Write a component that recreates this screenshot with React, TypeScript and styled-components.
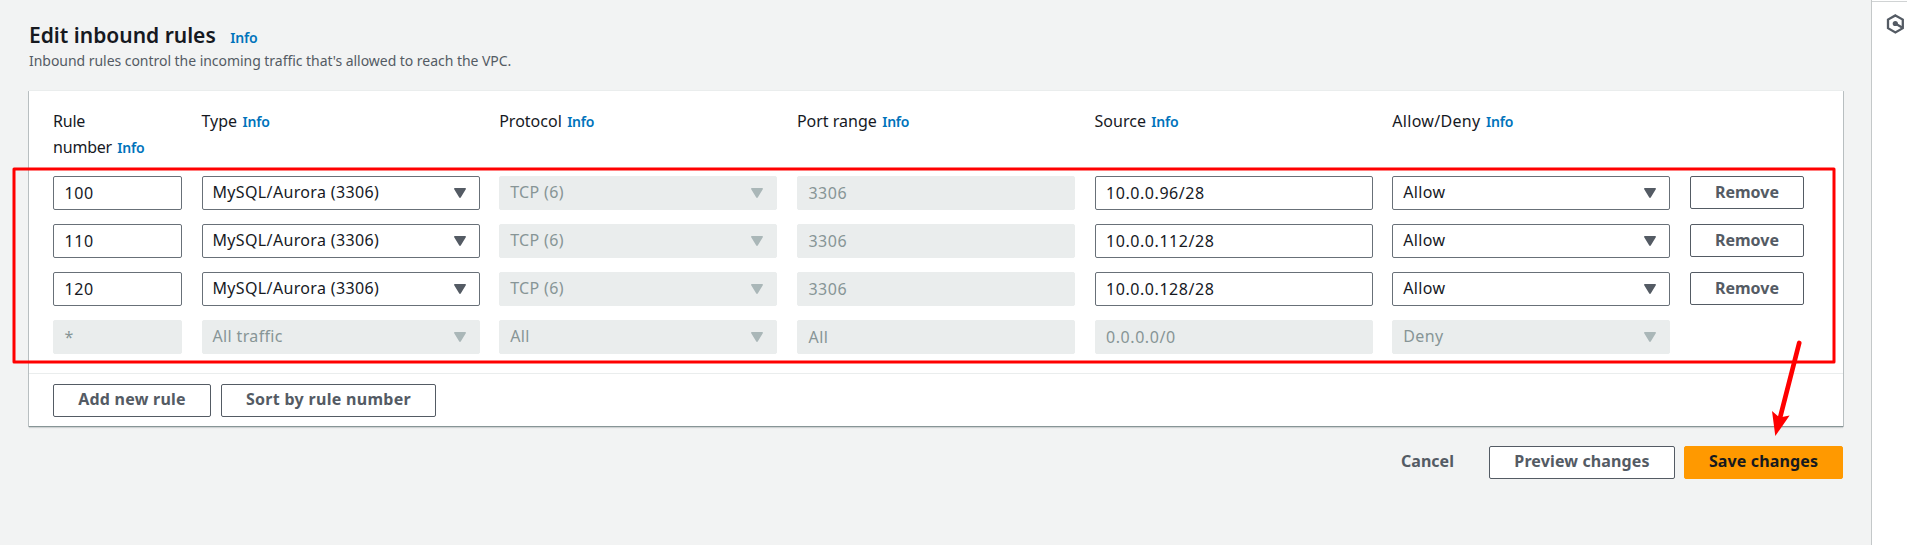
import React from "react";
import styled, { createGlobalStyle, css } from "styled-components";

const color = {
  ink: "#16191f",
  muted: "#545b64",
  link: "#0073bb",
  border: "#687078",
  disabled: "#879596",
  disabledArrow: "#aab7b8",
  disabledFill: "#eaeded",
  page: "#f2f3f3",
  primary: "#ff9900",
};

const GlobalStyle = createGlobalStyle`
  *, *::before, *::after { box-sizing: border-box; }
  body {
    margin: 0;
    background: ${color.page};
    color: ${color.ink};
    font: 400 16px/26px "Noto Sans", "Open Sans", sans-serif;
    overflow: hidden;
  }
`;

const Shell = styled.div`
  position: relative;
  display: flex;
  height: 545px;
`;

const Main = styled.main`
  flex: 1;
  min-width: 0;
  padding: 21px 28px 0 29px;
`;

const TitleRow = styled.div`
  display: flex;
  align-items: baseline;
  gap: 14.5px;
  height: 28px;
`;

const Title = styled.h1`
  margin: 0;
  font-size: 21px;
  font-weight: 600;
  line-height: 28px;
`;

const InfoLink = styled.a`
  color: ${color.link};
  font-size: 14px;
  font-weight: 600;
  letter-spacing: -0.2px;
`;

const Description = styled.p`
  margin: 0;
  padding-top: 1px;
  height: 41px;
  color: ${color.muted};
  font-size: 14px;
  line-height: 22px;
  letter-spacing: -0.04px;
`;

const Card = styled.section`
  display: flex;
  flex-direction: column;
  height: 336px;
  background: #fff;
  border-top: 1px solid #eaeded;
  box-shadow:
    0 1px 0 0 #879596,
    0 2px 1px 0 rgba(0, 28, 36, 0.15),
    1px 1px 0 0 rgba(0, 28, 36, 0.22),
    -1px 1px 0 0 rgba(0, 28, 36, 0.22);
`;

const columns = css`
  display: grid;
  grid-template-columns: 129px repeat(5, 278.2px) 114px;
  column-gap: 19.5px;
`;

const HeaderGrid = styled.div`
  ${columns}
  height: 85px;
  padding: 17px 24px 0;

  ${InfoLink} {
    margin-left: 1.2px;
  }
`;

const HeaderCell = styled.div<{ $tracking?: number }>`
  letter-spacing: ${(p) => p.$tracking ?? 0}px;
`;

const RuleGrid = styled.div`
  ${columns}
  row-gap: 14px;
  height: 197px;
  padding: 0 24px;
  align-content: start;
`;

const Field = styled.div<{ $disabled?: boolean; $select?: boolean }>`
  display: flex;
  align-items: center;
  justify-content: space-between;
  height: 34px;
  padding: 0 13px 0 ${(p) => (p.$select ? 10 : 10.5)}px;
  padding-bottom: ${(p) => (p.$select ? 2 : 0)}px;
  border: 1px solid ${(p) => (p.$disabled ? color.disabledFill : color.border)};
  border-radius: 2px;
  background: ${(p) => (p.$disabled ? color.disabledFill : "#fff")};
  color: ${(p) => (p.$disabled ? color.disabled : color.ink)};
  letter-spacing: ${(p) => (p.$select ? 0.35 : 0.55)}px;
`;

const Caret = styled.svg<{ $disabled?: boolean }>`
  width: 12px;
  height: 10px;
  margin-top: 1px;
  fill: ${(p) => (p.$disabled ? color.disabledArrow : color.muted)};
`;

const CardFooter = styled.div`
  display: flex;
  gap: 10px;
  flex: 1;
  padding: 10px 24px 0;
  border-top: 1px solid #eaeded;
`;

type ButtonKind = "normal" | "primary" | "link";

const Button = styled.button<{ $width: number; $kind?: ButtonKind; $tracking?: number }>`
  width: ${(p) => p.$width}px;
  height: 33px;
  padding: 0 0 2px;
  border: 1px solid ${color.muted};
  border-radius: 2px;
  background: #fff;
  color: ${color.muted};
  font: inherit;
  font-weight: 700;
  line-height: 28px;
  letter-spacing: ${(p) => p.$tracking ?? 0.13}px;
  white-space: nowrap;
  ${(p) =>
    p.$kind === "primary" &&
    css`
      border-color: ${color.primary};
      background: ${color.primary};
      color: ${color.ink};
    `}
  ${(p) =>
    p.$kind === "link" &&
    css`
      border-color: transparent;
      background: transparent;
    `}

  ${CardFooter} & {
    padding-bottom: 4px;
  }
`;

const Actions = styled.div`
  display: flex;
  justify-content: flex-end;
  gap: 9px;
  padding-top: 20px;

  ${Button} {
    padding-bottom: 4px;
  }
`;

const ToolPanel = styled.aside`
  width: 36px;
  padding-top: 1px;
  border-left: 1px solid #c4c8c9;
  background: #fff;
`;

const ToolToggle = styled.div`
  padding: 12px 0 0 14px;
  border-top: 1px solid #d0d3d4;
  line-height: 0;
`;

const Markup = styled.svg`
  position: absolute;
  inset: 0;
  width: 1907px;
  height: 545px;
  pointer-events: none;
`;

function Select({ value, disabled }: { value: string; disabled?: boolean }) {
  return (
    <Field $select $disabled={disabled}>
      {value}
      <Caret $disabled={disabled} viewBox="0 0 12 10">
        <path d="M.9 0h10.2c.8 0 1.1.7.7 1.3L6.9 9.3c-.5.8-1.3.8-1.8 0L.2 1.3C-.2.7.1 0 .9 0z" />
      </Caret>
    </Field>
  );
}

function Input({ value, disabled }: { value: string; disabled?: boolean }) {
  return <Field $disabled={disabled}>{value}</Field>;
}

const headers = [
  { label: "Rule number", tracking: -0.2 },
  { label: "Type" },
  { label: "Protocol" },
  { label: "Port range" },
  { label: "Source" },
  { label: "Allow/Deny", tracking: 0.3 },
];

const rules = [
  { number: "100", source: "10.0.0.96/28" },
  { number: "110", source: "10.0.0.112/28" },
  { number: "120", source: "10.0.0.128/28" },
];

export default function App() {
  return (
    <Shell>
      <GlobalStyle />
      <Main>
        <TitleRow>
          <Title>Edit inbound rules</Title>
          <InfoLink>Info</InfoLink>
        </TitleRow>
        <Description>
          Inbound rules control the incoming traffic that's allowed to reach the VPC.
        </Description>
        <Card>
          <HeaderGrid>
            {headers.map((h) => (
              <HeaderCell key={h.label} $tracking={h.tracking}>
                {h.label === "Rule number" ? <>Rule<br />number</> : h.label} <InfoLink>Info</InfoLink>
              </HeaderCell>
            ))}
          </HeaderGrid>
          <RuleGrid>
            {rules.map((r) => (
              <React.Fragment key={r.number}>
                <Input value={r.number} />
                <Select value="MySQL/Aurora (3306)" />
                <Select value="TCP (6)" disabled />
                <Input value="3306" disabled />
                <Input value={r.source} />
                <Select value="Allow" />
                <Button $width={114} $tracking={0}>Remove</Button>
              </React.Fragment>
            ))}
            <Input value="*" disabled />
            <Select value="All traffic" disabled />
            <Select value="All" disabled />
            <Input value="All" disabled />
            <Input value="0.0.0.0/0" disabled />
            <Select value="Deny" disabled />
          </RuleGrid>
          <CardFooter>
            <Button $width={158} $tracking={0.24}>Add new rule</Button>
            <Button $width={215} $tracking={0.3}>Sort by rule number</Button>
          </CardFooter>
        </Card>
        <Actions>
          <Button $width={105} $kind="link" $tracking={0}>Cancel</Button>
          <Button $width={186}>Preview changes</Button>
          <Button $width={159} $kind="primary">Save changes</Button>
        </Actions>
      </Main>
      <ToolPanel>
        <ToolToggle>
          <svg width="19" height="20" viewBox="0 0 19 20" fill="none" stroke={color.muted} strokeWidth="2.3">
            <path d="M9.4 1.4 16.8 5.6v8.6L9.4 18.5 2 14.2V5.6z" />
            <path d="M9.4 9.6 16 13.4" />
            <circle cx="9.3" cy="9.5" r="2.6" fill={color.muted} stroke="none" />
          </svg>
        </ToolToggle>
      </ToolPanel>
      <Markup viewBox="0 0 1907 545" fill="none" stroke="#f00">
        <rect x="14" y="169" width="1820" height="193" strokeWidth="3" strokeLinejoin="round" />
        <path d="M1799.2 343 1780 418" strokeWidth="4.7" strokeLinecap="round" />
        <path d="M1775.3 436 1772 411 1779.5 417.5 1789.6 415.5z" fill="#f00" stroke="none" />
      </Markup>
    </Shell>
  );
}
